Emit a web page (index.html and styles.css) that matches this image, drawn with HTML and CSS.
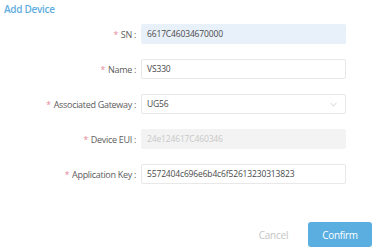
FILE: index.html
```html
<!DOCTYPE html>
<html>
<head>
<meta charset="utf-8">
<link rel="stylesheet" href="styles.css">
</head>
<body>
<div class="dialog">
  <div class="title">Add Device</div>
  <div class="form">
    <div class="row">
      <label class="label"><span class="req">*</span>SN<span class="colon">:</span></label>
      <div class="input focus">6617C46034670000</div>
    </div>
    <div class="row">
      <label class="label"><span class="req">*</span>Name<span class="colon">:</span></label>
      <div class="input">VS330</div>
    </div>
    <div class="row">
      <label class="label"><span class="req">*</span>Associated Gateway<span class="colon">:</span></label>
      <div class="input select">UG56
        <svg class="chev" width="7" height="5" viewBox="0 0 7 5"><path d="M0.5 0.7 L3.5 4.2 L6.5 0.7" fill="none" stroke="#cccccc" stroke-width="0.8"/></svg>
      </div>
    </div>
    <div class="row">
      <label class="label"><span class="req">*</span>Device EUI<span class="colon">:</span></label>
      <div class="input disabled">24e124617C460346</div>
    </div>
    <div class="row">
      <label class="label"><span class="req">*</span>Application Key<span class="colon">:</span></label>
      <div class="input">5572404c696e6b4c6f52613230313823</div>
    </div>
  </div>
  <div class="actions">
    <span class="cancel">Cancel</span>
    <button class="confirm">Confirm</button>
  </div>
</div>
</body>
</html>
```
FILE: styles.css
```css
html, body {
  margin: 0;
  padding: 0;
  background: #ffffff;
}
.dialog {
  width: 380px;
  height: 250px;
  font-family: "Open Sans", "Noto Sans", sans-serif;
  position: relative;
}
.title {
  padding: 1px 0 0 4px;
  height: 16px;
  font-size: 10px;
  font-weight: 600;
  letter-spacing: -0.3px;
  color: #62ade0;
  line-height: 16px;
}
.form {
  margin-top: 7px;
  display: flex;
  flex-direction: column;
  gap: 15px;
}
.row {
  display: grid;
  grid-template-columns: 136px 205px;
  column-gap: 5px;
  align-items: center;
  height: 20px;
}
.label {
  text-align: right;
  font-size: 9px;
  letter-spacing: -0.3px;
  color: #5c5c5c;
}
.colon {
  margin-left: 2px;
}
.req {
  color: #e8869a;
  margin-right: 3px;
  font-size: 8.5px;
}
.input {
  box-sizing: border-box;
  height: 20px;
  border: 1px solid #e8e8e8;
  border-radius: 2px;
  padding: 0 5px;
  font-size: 8.5px;
  letter-spacing: -0.15px;
  line-height: 18px;
  color: #4a4a4a;
  position: relative;
}
.input.focus {
  background: #e8f0fa;
  border-color: #e8f0fa;
}
.input.disabled {
  background: #f3f3f3;
  border-color: #f3f3f3;
  color: #c8c8c8;
}
.chev {
  position: absolute;
  right: 8px;
  top: 7px;
}
.actions {
  position: absolute;
  top: 222px;
  left: 251px;
  display: flex;
  align-items: center;
  gap: 12px;
}
.cancel {
  font-size: 10px;
  letter-spacing: -0.2px;
  color: #c4c4c4;
  width: 45px;
  text-align: center;
}
.confirm {
  width: 64px;
  height: 25px;
  border: none;
  border-radius: 3px;
  background: #5aaee0;
  color: #fff;
  font-family: "Open Sans", "Noto Sans", sans-serif;
  font-size: 10px;
  letter-spacing: -0.3px;
  padding: 0;
}
```
